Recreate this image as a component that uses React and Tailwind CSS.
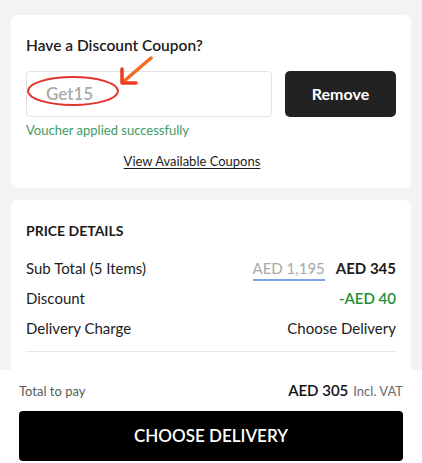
export default function App() {
  return (
    <div className="h-[463px] w-[422px] flex flex-col bg-[#f3f3f3] overflow-hidden" style={{ fontFamily: "Lato, 'Noto Sans', sans-serif" }}>
      <div className="flex-1 overflow-hidden px-[11px] pt-[15px] flex flex-col gap-[12px]">
        {/* coupon card */}
        <div className="bg-white rounded-[6px] px-[15px] pt-[19px] pb-[16px]">
          <h2 className="text-[15.5px] leading-[22px] font-semibold text-[#1c1c1c]">Have a Discount Coupon?</h2>
          <div className="relative flex gap-[13px] mt-[15px]">
            <div className="relative flex-1 h-[46px] border border-[#e3e3e3] rounded-[4px] flex items-center pl-[19px]">
              <span className="text-[17px] font-semibold text-[#a9a9a9]">Get15</span>
              <svg className="absolute left-[0px] top-[3px]" width="94" height="32" viewBox="0 0 94 32">
                <ellipse cx="46" cy="16" rx="45" ry="14" fill="none" stroke="#e3342b" strokeWidth="2" />
              </svg>
            </div>
            <button className="w-[111px] h-[46px] rounded-[5px] bg-[#222222] text-white text-[16px] font-bold">Remove</button>
            <svg className="absolute left-[91px] top-[-15px]" width="40" height="34" viewBox="0 0 40 34">
              <path d="M34 2 L6 26" stroke="#f36b21" strokeWidth="3.5" strokeLinecap="round" />
              <path d="M5 13 L5 27 L19 27" fill="none" stroke="#ee3b1f" strokeWidth="3.5" strokeLinecap="round" strokeLinejoin="round" />
            </svg>
          </div>
          <p className="mt-[4px] text-[13px] leading-[18px] text-[#3e9b64]">Voucher applied successfully</p>
          <div className="mt-[9px] pr-[38px] text-center">
            <a className="text-[13px] leading-[18px] text-[#1c1c1c] underline underline-offset-2">View Available Coupons</a>
          </div>
        </div>

        {/* price details */}
        <div className="bg-white rounded-[6px] px-[15px] pt-[21px] pb-[40px]">
          <h3 className="text-[14px] leading-[20px] font-bold text-[#1c1c1c]">PRICE DETAILS</h3>
          <div className="mt-[17px] flex flex-col gap-[10px] text-[15px] leading-[20px] text-[#1c1c1c]">
            <div className="flex justify-between items-center">
              <span>Sub Total (5 Items)</span>
              <div className="flex items-center gap-[11px]">
                <span className="text-[#a8a8a8] border-b-2 border-[#7fa3ea] pb-[1px] -mb-[3px]">AED 1,195</span>
                <span className="font-bold">AED 345</span>
              </div>
            </div>
            <div className="flex justify-between items-center">
              <span>Discount</span>
              <span className="font-semibold text-[#1f8f3a]">-AED 40</span>
            </div>
            <div className="flex justify-between items-center">
              <span>Delivery Charge</span>
              <span>Choose Delivery</span>
            </div>
          </div>
          <div className="mt-[13px] border-t border-[#e6e6e6]" />
        </div>
      </div>

      {/* footer */}
      <div className="bg-white px-[19px] pt-[8px] h-[93px]">
        <div className="flex justify-between items-baseline">
          <span className="text-[13px] text-[#5a5a5a]">Total to pay</span>
          <span>
            <span className="text-[15px] font-semibold text-[#111]">AED 305</span>
            <span className="text-[13px] text-[#6a6a6a] ml-[5px]">Incl. VAT</span>
          </span>
        </div>
        <button className="mt-[9px] w-full h-[50px] bg-black rounded-[4px] text-white text-[17px] font-semibold">CHOOSE DELIVERY</button>
      </div>
    </div>
  );
}
